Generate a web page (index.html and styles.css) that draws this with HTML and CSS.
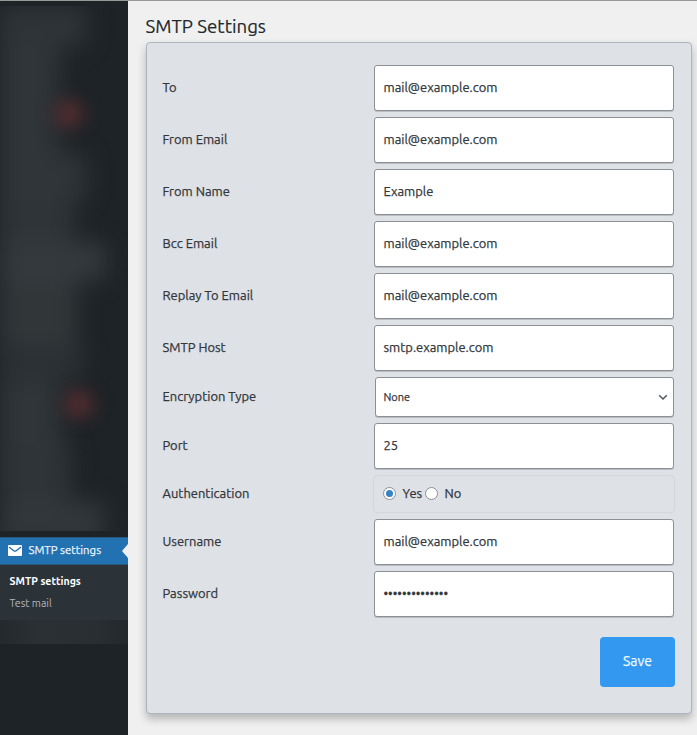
FILE: index.html
```html
<!DOCTYPE html>
<html lang="en">
<head>
<meta charset="utf-8">
<title>SMTP Settings</title>
<link rel="stylesheet" href="styles.css">
</head>
<body>
<div class="app">
  <aside class="sidebar">
    <div class="obscured">
      <div class="smudges">
        <div class="smudge s1"></div>
        <div class="smudge s2"></div>
        <div class="smudge s3"></div>
        <div class="smudge s4"></div>
        <div class="smudge s5"></div>
        <div class="smudge s6"></div>
        <div class="smudge s7"></div>
        <div class="smudge s8"></div>
        <div class="smudge s9"></div>
        <div class="smudge s10"></div>
      </div>
      <div class="badge badge-top"></div>
      <div class="badge badge-low"></div>
    </div>
    <a class="menu-item">
      <svg class="mail" viewBox="0 0 14 11"><rect width="14" height="11" rx="1" fill="#fff"/><path d="M1 2 5.800 5.700Q7 6.600 8.200 5.700L13 2" fill="none" stroke="#2271b1" stroke-width="1.400"/></svg>
      <span>SMTP settings</span>
    </a>
    <nav class="submenu">
      <a class="current"><span>SMTP settings</span></a>
      <a><span>Test mail</span></a>
    </nav>
    <div class="obscured-foot"></div>
  </aside>
  <main class="content">
    <h1><span>SMTP Settings</span></h1>
    <form class="card">
      <div class="row"><label>To</label><div class="field">mail@example.com</div></div>
      <div class="row"><label>From Email</label><div class="field">mail@example.com</div></div>
      <div class="row"><label>From Name</label><div class="field">Example</div></div>
      <div class="row"><label>Bcc Email</label><div class="field">mail@example.com</div></div>
      <div class="row"><label>Replay To Email</label><div class="field">mail@example.com</div></div>
      <div class="row"><label>SMTP Host</label><div class="field">smtp.example.com</div></div>
      <div class="row"><label>Encryption Type</label><div class="field select"><span>None</span><svg class="chevron" viewBox="0 0 10 7"><path d="M1.200 1.200 5 5l3.800-3.800" fill="none" stroke="#50575e" stroke-width="1.500"/></svg></div></div>
      <div class="row"><label>Port</label><div class="field">25</div></div>
      <div class="row"><label>Authentication</label><div class="radios"><i class="radio on"></i><span class="yes">Yes</span><i class="radio"></i><span>No</span></div></div>
      <div class="row"><label>Username</label><div class="field">mail@example.com</div></div>
      <div class="row"><label>Password</label><div class="field dots">••••••••••••••</div></div>
      <button class="save" type="button">Save</button>
    </form>
  </main>
</div>
</body>
</html>
```
FILE: styles.css
```css
* { box-sizing: border-box; }
body { margin: 0; background: #f0f0f0; font: 12.95px/20px "Ubuntu", "Noto Sans", sans-serif; color: #32373c; -webkit-text-stroke: 0.25px; }
.app { display: flex; height: 735px; border-top: 1px solid #98989a; overflow: hidden; }
.sidebar { width: 128px; margin-top: -1px; background: #1e2327; flex: none; border-top: 1px solid #15191c; display: flex; flex-direction: column; z-index: 1; }
.obscured { position: relative; overflow: hidden; height: 525px; margin: 5px 0 6px; flex: none; }
.smudges { filter: blur(11px); }
.smudge { background: #2f3538; }
.s1 { width: 86px; height: 40px; background: #2e3438; }
.s2 { width: 60px; height: 108px; }
.s3 { width: 86px; height: 46px; }
.s4 { width: 74px; height: 42px; background: #2e3437; }
.s5 { width: 106px; height: 38px; background: #34393d; }
.s6 { width: 77px; height: 66px; background: #313739; }
.s7 { width: 84px; height: 34px; background: #2a3033; }
.s8 { width: 62px; height: 64px; background: #2f3538; }
.s9 { width: 70px; height: 57px; background: #2e3437; }
.s10 { width: 104px; height: 44px; background: #31373a; }
.badge { position: absolute; width: 28px; height: 28px; border-radius: 50%; background: #562d30; filter: blur(9px); }
.badge-top { left: 55px; top: 94px; }
.badge-low { left: 65px; top: 384px; }
.menu-item { position: relative; height: 28px; flex: none; background: #2271b1; border-top: 1px solid #27597f; border-bottom: 1px solid #27597f; color: #e9f1f8; font-size: 11.4px; display: flex; align-items: center; padding: 0 0 0 8px; gap: 6.5px; }
.menu-item span { padding-bottom: 2px; }
.menu-item::after { content: ""; position: absolute; right: 0; top: 6px; border: 7px solid transparent; border-left: 0; border-right: 6px solid #f0f0f0; }
.mail { width: 14px; height: 11px; margin-bottom: 1px; }
.submenu { background: #2c3338; height: 55px; flex: none; padding: 5px 0 0 9.5px; font-size: 10.55px; color: #b2b5b8; -webkit-text-stroke: 0; }
.submenu a { display: block; height: 22px; line-height: 22px; }
.submenu .current { color: #fff; font-weight: 700; }
.obscured-foot { height: 24px; background: linear-gradient(90deg, #23292d, #2a3034 30%, #282e32 75%, #22282c); }
.content { flex: 1; padding: 14px 5px 0 18px; }
h1 { margin: 0 0 0 -0.5px; height: 27px; font-size: 18.65px; line-height: 23px; font-weight: 400; color: #23282d; -webkit-text-stroke: 0.15px; }
.card { height: 672px; border: 1px solid #acb4be; border-radius: 4px; background: #dee1e6; padding: 22px 17px 0 15.5px; display: flex; flex-direction: column; gap: 6px; box-shadow: 0 5px 9px rgba(0,0,0,.25); }
.row { display: flex; align-items: center; }
label { width: 211.5px; flex: none; padding-bottom: 2px; }
.field { width: 300px; height: 46px; border: 1px solid #8c8f94; border-radius: 3px; background: #fff; padding: 0 9px 2px 8.5px; display: flex; align-items: center; box-shadow: 0 1px 0 #b9bcc0; }
.select { margin-left: 1px; width: 299px; height: 40px; font-size: 11px; padding: 0 5.5px 1px 7.5px; justify-content: space-between; }
.chevron { width: 10px; height: 7px; margin-top: 2px; }
.radios { margin: 0 -1px; width: 302px; height: 38px; border: 1px solid #d3d6db; border-radius: 4px; display: flex; align-items: center; padding: 0 0 2px 9px; }
.radio { width: 13px; height: 13px; border: 1px solid #8c8f94; border-radius: 50%; background: #fff; display: flex; margin-right: 6.5px; }
.radio.on::after { content: ""; margin: auto; width: 7px; height: 7px; border-radius: 50%; background: #3582c4; }
.yes { width: 22.5px; }
.dots { font-size: 12.8px; }
.save { align-self: flex-end; margin: 14px -1px 0 0; width: 75px; height: 50px; border: 0; border-radius: 4px; background: #3399f0; color: #eef6fe; font: 14px/20px "Ubuntu", "Noto Sans", sans-serif; padding: 0 0 2px; }
```
